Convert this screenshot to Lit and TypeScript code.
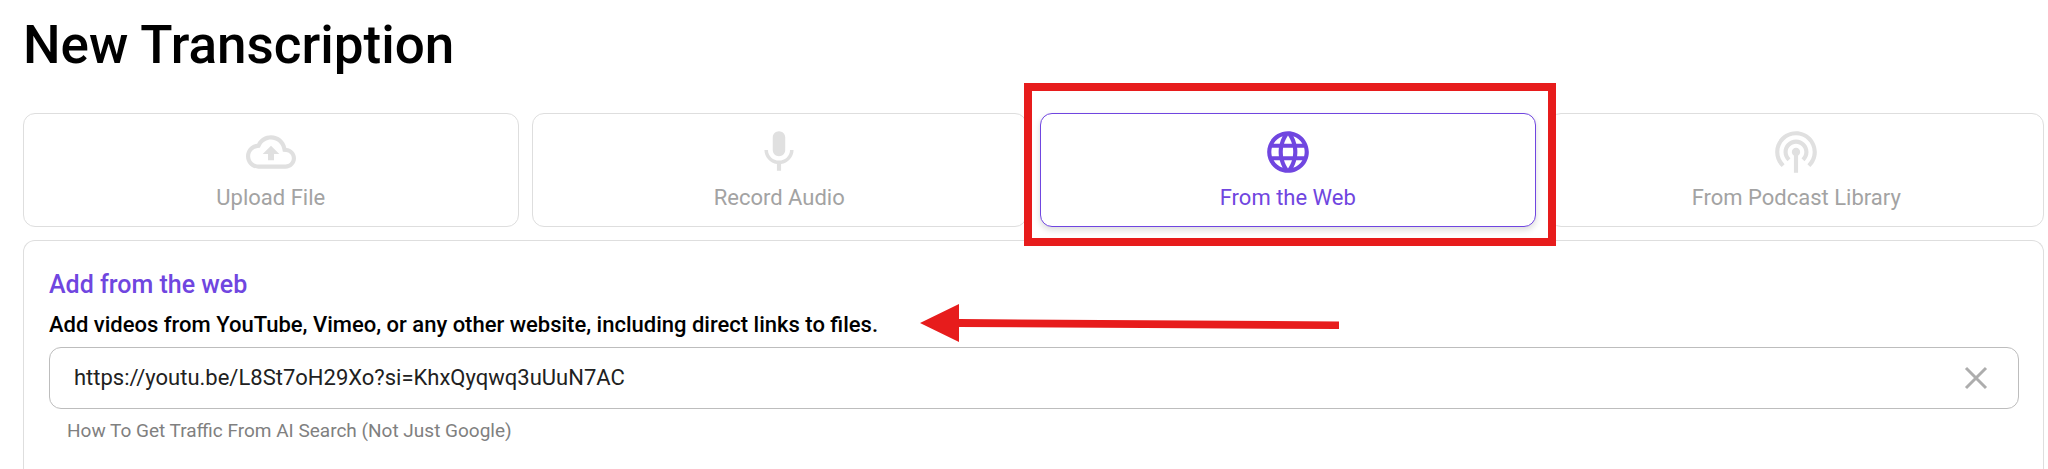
import { LitElement, html, css, svg } from "lit";
import { customElement, state } from "lit/decorators.js";
import { classMap } from "lit/directives/class-map.js";

interface Source {
  id: string;
  label: string;
  path: string;
}

const SOURCES: Source[] = [
  {
    id: "upload",
    label: "Upload File",
    path: "M19.35 10.04C18.67 6.59 15.64 4 12 4 9.11 4 6.6 5.64 5.35 8.04 2.34 8.36 0 10.91 0 14c0 3.31 2.69 6 6 6h13c2.76 0 5-2.24 5-5 0-2.64-2.05-4.78-4.65-4.96zM19 18H6c-2.21 0-4-1.79-4-4 0-2.05 1.53-3.76 3.56-3.97l1.07-.11.5-.95C8.08 7.14 9.94 6 12 6c2.62 0 4.88 1.86 5.39 4.43l.3 1.5 1.53.11c1.56.1 2.78 1.41 2.78 2.96 0 1.65-1.35 3-3 3zM8 13h2.55v3h2.9v-3H16l-4-4z",
  },
  {
    id: "record",
    label: "Record Audio",
    path: "M12 14c1.66 0 2.99-1.34 2.99-3L15 5c0-1.66-1.34-3-3-3S9 3.34 9 5v6c0 1.66 1.34 3 3 3zm5.3-3c0 3-2.54 5.1-5.3 5.1S6.7 14 6.7 11H5c0 3.41 2.72 6.23 6 6.72V21h2v-3.28c3.28-.48 6-3.3 6-6.72h-1.7z",
  },
  {
    id: "web",
    label: "From the Web",
    path: "M11.99 2C6.47 2 2 6.48 2 12s4.47 10 9.99 10C17.52 22 22 17.52 22 12S17.52 2 11.99 2zm6.93 6h-2.95c-.32-1.25-.78-2.45-1.38-3.56 1.84.63 3.37 1.91 4.33 3.56zM12 4.04c.83 1.2 1.48 2.53 1.91 3.96h-3.82c.43-1.43 1.08-2.76 1.91-3.96zM4.26 14C4.1 13.36 4 12.69 4 12s.1-1.36.26-2h3.38c-.08.66-.14 1.32-.14 2s.06 1.34.14 2H4.26zm.82 2h2.95c.32 1.25.78 2.45 1.38 3.56-1.84-.63-3.37-1.9-4.33-3.56zm2.95-8H5.08c.96-1.66 2.49-2.93 4.33-3.56C8.81 5.55 8.35 6.75 8.03 8zM12 19.96c-.83-1.2-1.48-2.53-1.91-3.96h3.82c-.43 1.43-1.08 2.76-1.91 3.96zM14.34 14H9.66c-.09-.66-.16-1.32-.16-2s.07-1.35.16-2h4.68c.09.65.16 1.32.16 2s-.07 1.34-.16 2zm.25 5.56c.6-1.11 1.06-2.31 1.38-3.56h2.95c-.96 1.65-2.49 2.93-4.33 3.56zM16.36 14c.08-.66.14-1.32.14-2s-.06-1.34-.14-2h3.38c.16.64.26 1.31.26 2s-.1 1.36-.26 2h-3.38z",
  },
  {
    id: "podcast",
    label: "From Podcast Library",
    path: "M14 12c0 .74-.4 1.38-1 1.72V22h-2v-8.28c-.6-.35-1-.98-1-1.72 0-1.1.9-2 2-2s2 .9 2 2zm-2-6c-3.31 0-6 2.69-6 6 0 1.74.75 3.31 1.94 4.4l1.42-1.42C8.53 14.25 8 13.19 8 12c0-2.21 1.79-4 4-4s4 1.79 4 4c0 1.19-.53 2.25-1.36 2.98l1.42 1.42C17.25 15.31 18 13.74 18 12c0-3.31-2.69-6-6-6zm0-4C6.48 2 2 6.48 2 12c0 2.85 1.2 5.41 3.11 7.24l1.42-1.42C4.98 16.36 4 14.29 4 12c0-4.41 3.59-8 8-8s8 3.59 8 8c0 2.29-.98 4.36-2.53 5.82l1.42 1.42C20.8 17.41 22 14.85 22 12c0-5.52-4.48-10-10-10z",
  },
];

@customElement("app-root")
export class AppRoot extends LitElement {
  static styles = css`
    :host {
      display: flex;
      flex-direction: column;
      box-sizing: border-box;
      min-height: 100vh;
      padding: 14px 4px 0 23px;
      background: #fff;
      color: #000;
      font-family: Roboto, "Liberation Sans", sans-serif;
    }
    *,
    *::before,
    *::after {
      box-sizing: border-box;
    }
    .title {
      margin: 0 0 37px;
      font-size: 53px;
      line-height: 62px;
      font-weight: 500;
    }
    .sources {
      display: grid;
      grid-template-columns: repeat(4, 1fr);
      gap: 13px;
    }
    .source {
      position: relative;
      display: flex;
      flex-direction: column;
      align-items: center;
      gap: 7px;
      padding: 13px 16px 14px;
      border: 1px solid #dedede;
      border-radius: 12px;
      background: #fff;
      color: #a3a3a3;
      font: inherit;
      font-size: 22px;
      line-height: 28px;
      cursor: pointer;
    }
    .icon {
      display: block;
      width: 50px;
      height: 50px;
      fill: #e0e0e0;
    }
    .selected {
      z-index: 1;
      border-color: #7046e0;
      color: #7046e0;
      box-shadow: 0 3px 6px rgba(0, 0, 0, 0.14);
    }
    .selected .icon {
      fill: #7046e0;
    }
    .selected::after {
      content: "";
      position: absolute;
      inset: -31px -21px -20px -17px;
      border: 8px solid #e71c1c;
      pointer-events: none;
    }
    .panel {
      flex: 1;
      margin-top: 13px;
      padding: 29px 24px 24px 25px;
      border: 1px solid #dedede;
      border-bottom: 0;
      border-radius: 12px 12px 0 0;
    }
    .heading {
      margin: 0 0 11px;
      color: #7046e0;
      font-size: 25px;
      line-height: 30px;
      font-weight: 500;
    }
    .intro {
      display: flex;
      align-items: center;
      gap: 42px;
      height: 28px;
      margin-bottom: 8px;
    }
    .label {
      font-size: 22px;
      line-height: 28px;
      font-weight: 500;
    }
    .arrow {
      flex: none;
      width: 420px;
      height: 42px;
      fill: #e71c1c;
    }
    .field {
      display: flex;
      align-items: center;
      height: 62px;
      padding: 0 24px;
      border: 1px solid #bdbdbd;
      border-radius: 12px;
    }
    .input {
      flex: 1;
      min-width: 0;
      padding: 0;
      border: 0;
      outline: 0;
      background: none;
      color: #212121;
      font: inherit;
      font-size: 22px;
      line-height: 28px;
    }
    .clear {
      display: flex;
      padding: 0;
      border: 0;
      background: none;
      cursor: pointer;
    }
    .cross {
      width: 36px;
      height: 36px;
      stroke: #adadad;
      stroke-width: 3;
    }
    .hint {
      margin: 10px 18px 0;
      color: #808080;
      font-size: 19px;
      line-height: 24px;
    }
  `;

  @state() private selected = "web";
  @state() private url = "https://youtu.be/L8St7oH29Xo?si=KhxQyqwq3uUuN7AC";

  private renderSource(source: Source) {
    const active = source.id === this.selected;
    return html`<button
      type="button"
      class=${classMap({ source: true, selected: active })}
      aria-pressed=${active ? "true" : "false"}
      @click=${() => (this.selected = source.id)}
    >
      <svg class="icon" viewBox="0 0 24 24" aria-hidden="true">${svg`<path d=${source.path}></path>`}</svg>
      <span>${source.label}</span>
    </button>`;
  }

  render() {
    return html`
      <h1 class="title">New Transcription</h1>
      <nav class="sources" aria-label="Transcription source">
        ${SOURCES.map((source) => this.renderSource(source))}
      </nav>
      <section class="panel">
        <h2 class="heading">Add from the web</h2>
        <div class="intro">
          <label class="label" for="url"
            >Add videos from YouTube, Vimeo, or any other website, including direct links to files.</label
          >
          <svg class="arrow" viewBox="0 0 420 42" aria-hidden="true">
            <path d="M0 19 39 0V15L419 17.500V25L39 23V38Z"></path>
          </svg>
        </div>
        <div class="field">
          <input
            class="input"
            id="url"
            type="text"
            spellcheck="false"
            aria-describedby="hint"
            .value=${this.url}
            @input=${(e: Event) => (this.url = (e.target as HTMLInputElement).value)}
          />
          <button class="clear" type="button" aria-label="Clear" @click=${() => (this.url = "")}>
            <svg class="cross" viewBox="0 0 36 36" aria-hidden="true">
              <path d="M8 8 28 28M28 8 8 28"></path>
            </svg>
          </button>
        </div>
        <p class="hint" id="hint">How To Get Traffic From AI Search (Not Just Google)</p>
      </section>
    `;
  }
}
